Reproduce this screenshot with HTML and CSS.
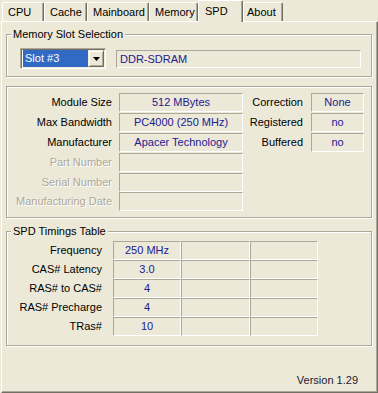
FILE: index.html
```html
<!DOCTYPE html>
<html>
<head>
<meta charset="utf-8">
<link rel="stylesheet" href="styles.css">
</head>
<body>
<div class="window">
  <div class="tabs">
    <div class="tab t-cpu">CPU</div>
    <div class="tab t-cache">Cache</div>
    <div class="tab t-main">Mainboard</div>
    <div class="tab t-mem">Memory</div>
    <div class="tab active t-spd">SPD</div>
    <div class="tab t-about">About</div>
  </div>
  <div class="panel">
    <div class="group slot">
      <div class="group-title">Memory Slot Selection</div>
      <div class="slot-row">
        <div class="combo">
          <div class="combo-value">Slot #3</div>
          <div class="combo-btn"><svg width="7" height="4" viewBox="0 0 7 4"><path d="M0 0H7L3.5 4Z" fill="#000"/></svg></div>
        </div>
        <div class="field field-left">DDR-SDRAM</div>
      </div>
    </div>

    <div class="group info">
      <div class="info-grid">
        <div class="lbl">Module Size</div><div class="field">512 MBytes</div><div class="lbl lbl2">Correction</div><div class="field">None</div>
        <div class="lbl">Max Bandwidth</div><div class="field">PC4000 (250 MHz)</div><div class="lbl lbl2">Registered</div><div class="field">no</div>
        <div class="lbl">Manufacturer</div><div class="field">Apacer Technology</div><div class="lbl lbl2">Buffered</div><div class="field">no</div>
        <div class="lbl dis">Part Number</div><div class="field"></div>
        <div class="lbl dis">Serial Number</div><div class="field"></div>
        <div class="lbl dis">Manufacturing Date</div><div class="field"></div>
      </div>
    </div>

    <div class="group timings">
      <div class="group-title">SPD Timings Table</div>
      <div class="timing-grid">
        <div class="lbl">Frequency</div><div class="field">250 MHz</div><div class="field"></div><div class="field"></div>
        <div class="lbl">CAS# Latency</div><div class="field">3.0</div><div class="field"></div><div class="field"></div>
        <div class="lbl">RAS# to CAS#</div><div class="field">4</div><div class="field"></div><div class="field"></div>
        <div class="lbl">RAS# Precharge</div><div class="field">4</div><div class="field"></div><div class="field"></div>
        <div class="lbl">TRas#</div><div class="field">10</div><div class="field"></div><div class="field"></div>
      </div>
    </div>

    <div class="footer">Version 1.29</div>
  </div>
</div>
</body>
</html>
```
FILE: styles.css
```css
body {
  margin: 0;
  background: #ECE9D8;
  font-family: "Liberation Sans", Arial, sans-serif;
  font-size: 11px;
  color: #000;
}

.window {
  width: 378px;
  height: 393px;
  overflow: hidden;
}

/* Tabs */
.tabs {
  display: flex;
  align-items: flex-end;
  height: 21px;
  padding-left: 2px;
  box-sizing: border-box;
}

.tab {
  box-sizing: border-box;
  height: 19px;
  padding: 1px 0 0 5px;
  line-height: 17px;
  border-top: 1px solid #fff;
  border-left: 1px solid #fff;
  border-right: 1px solid #716F64;
  box-shadow: inset -1px 0 #ACA899;
  border-radius: 2px 2px 0 0;
  white-space: nowrap;
}

.t-cpu { width: 42px; }
.t-cache { width: 43px; }
.t-main { width: 62px; }
.t-mem { width: 49px; }
.t-spd { width: 45px; }
.t-about { width: 40px; padding-left: 3px; }

.tab.active {
  height: 22px;
  margin-bottom: -1px;
  position: relative;
  z-index: 1;
  background: #ECE9D8;
  line-height: 19px;
  padding-left: 6px;
}

/* Panel */
.panel {
  box-sizing: border-box;
  margin-left: 1px;
  width: 377px;
  height: 372px;
  border-top: 1px solid #fff;
  border-left: 1px solid #fff;
  border-right: 1px solid #716F64;
  border-bottom: 1px solid #716F64;
  box-shadow: inset -1px -1px #ACA899;
  padding: 12px 5px 0 4px;
  display: flex;
  flex-direction: column;
}

/* Group boxes */
.group {
  border: 1px solid #ACA899;
  box-shadow: inset 1px 1px #fff, 1px 1px #fff;
}

.group-title {
  width: fit-content;
  margin: -7px 0 0 4px;
  padding: 0 2px;
  background: #ECE9D8;
  line-height: 13px;
  white-space: nowrap;
}

.slot-row {
  display: flex;
  align-items: center;
  gap: 10px;
  padding: 7px 10px 7px 13px;
}

/* Combo box */
.combo {
  box-sizing: border-box;
  width: 86px;
  height: 21px;
  border: 1px solid;
  border-color: #ACA899 #fff #fff #ACA899;
  box-shadow: inset 1px 1px #716F64, inset -1px -1px #F1EFE2;
  padding: 1px;
  background: #fff;
  display: flex;
}

.combo-value {
  flex: 1;
  margin-left: 1px;
  background: #316AC5;
  color: #fff;
  line-height: 17px;
  padding-left: 2px;
}

.combo-btn {
  box-sizing: border-box;
  width: 16px;
  border: 1px solid;
  border-color: #F1EFE2 #716F64 #716F64 #F1EFE2;
  box-shadow: inset 1px 1px #fff, inset -1px -1px #ACA899;
  background: #ECE9D8;
  display: flex;
  align-items: center;
  justify-content: center;
}

.combo-btn svg { display: block; }

/* Read-only fields */
.field {
  box-sizing: border-box;
  height: 19px;
  border: 1px solid;
  border-color: #ACA899 #fff #fff #ACA899;
  color: #202090;
  text-align: center;
  line-height: 17px;
  white-space: nowrap;
  overflow: hidden;
}

.field-left {
  flex: 1;
  height: 18px;
  line-height: 16px;
  text-align: left;
  padding-left: 3px;
}

/* Info group */
.info {
  margin-top: 9px;
  padding: 6px 0;
}

.info-grid {
  display: grid;
  grid-template-columns: 112px 124px 68px 53px;
  grid-template-rows: 20px 20px 20px 20px 19px 19px;
}

.lbl {
  grid-column: 1;
  text-align: right;
  padding-right: 7px;
  line-height: 19px;
  white-space: nowrap;
}

.lbl2 {
  grid-column: 3;
  padding-right: 8px;
}

.dis {
  color: #ACA899;
  text-shadow: 1px 1px 0 #fff;
}

/* Timings group */
.timings {
  margin-top: 13px;
  padding-bottom: 9px;
}

.timing-grid {
  display: grid;
  grid-template-columns: 106px 68px 69px 68px;
  grid-auto-rows: 19px;
  padding-top: 3px;
}

.timing-grid .lbl {
  padding-right: 11px;
}

.footer {
  margin-top: 28px;
  text-align: right;
  padding-right: 14px;
  line-height: 13px;
  color: #221a30;
}
```
